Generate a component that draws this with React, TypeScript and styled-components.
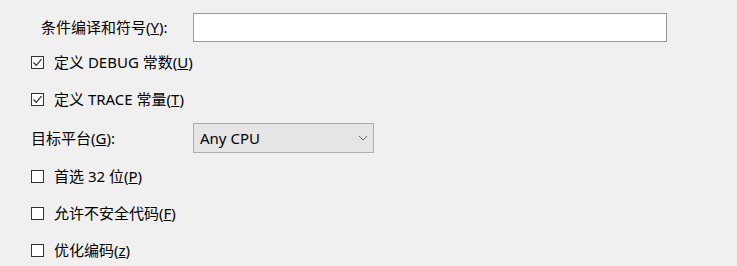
import styled, { createGlobalStyle } from 'styled-components'

const GlobalStyle = createGlobalStyle`
    body {
        margin: 0;
        background: #f0f0f0;
        font-family: "Noto Sans", "Noto Sans CJK SC", sans-serif;
        font-size: 15px;
        color: #000;
    }
`

const Panel = styled.div`
    display: flex;
    flex-direction: column;
    padding: 13px 0 0 31px;
`

const FieldRow = styled.div<{ $height?: number, $top?: number }>`
    display: grid;
    grid-template-columns: 162px auto;
    align-items: center;
    height: ${props => props.$height || 29}px;
    margin-top: ${props => props.$top || 0}px;
`

const FieldLabel = styled.label<{ $indent?: number }>`
    padding-left: ${props => props.$indent || 0}px;
    white-space: nowrap;
    line-height: 1;
`

const TextBox = styled.input`
    box-sizing: border-box;
    width: 474px;
    height: 29px;
    border: 1px solid #999;
    background: #fff;
    outline: none;
`

const Select = styled.div`
    box-sizing: border-box;
    width: 181px;
    height: 30px;
    border: 1px solid #adadad;
    background: #e5e5e5;
    display: flex;
    align-items: center;
    justify-content: space-between;
    padding: 0 5px 0 6px;
    line-height: 1;
`

const CheckRow = styled.label<{ $top?: number }>`
    display: flex;
    align-items: center;
    gap: 10px;
    height: 37px;
    margin-top: ${props => props.$top || 0}px;
    line-height: 1;
    white-space: nowrap;
`

const Box = styled.span`
    box-sizing: border-box;
    flex: none;
    width: 13px;
    height: 13px;
    border: 1px solid #333;
    background: #fff;
    display: flex;
    align-items: center;
    justify-content: center;
`

const Check = ({ checked }: { checked?: boolean }) => (
    <Box>
        {checked && (
            <svg width="11" height="11" viewBox="0 0 11 11">
                <path d="M1.5 5.5 L4.3 8.3 L9.5 2.2" fill="none" stroke="#333" strokeWidth="1.3" />
            </svg>
        )}
    </Box>
)

const Chevron = () => (
    <svg width="10" height="6" viewBox="0 0 10 6">
        <path d="M1 1 L5 5 L9 1" fill="none" stroke="#666" strokeWidth="1" />
    </svg>
)

const CheckItem = ({ checked, text, hotkey, top }: { checked?: boolean, text: string, hotkey: string, top?: number }) => (
    <CheckRow $top={top}>
        <Check checked={checked} />
        <span>{text}(<u>{hotkey}</u>)</span>
    </CheckRow>
)

export default function App() {
    return (
        <>
            <GlobalStyle />
            <Panel>
                <FieldRow>
                    <FieldLabel $indent={10}>条件编译和符号(<u>Y</u>):</FieldLabel>
                    <TextBox />
                </FieldRow>
                <CheckItem top={2} checked text="定义 DEBUG 常数" hotkey="U" />
                <CheckItem checked text="定义 TRACE 常量" hotkey="T" />
                <FieldRow $height={30} $top={5}>
                    <FieldLabel>目标平台(<u>G</u>):</FieldLabel>
                    <Select>
                        <span>Any CPU</span>
                        <Chevron />
                    </Select>
                </FieldRow>
                <CheckItem top={5} text="首选 32 位" hotkey="P" />
                <CheckItem text="允许不安全代码" hotkey="F" />
                <CheckItem text="优化编码" hotkey="z" />
            </Panel>
        </>
    )
}
